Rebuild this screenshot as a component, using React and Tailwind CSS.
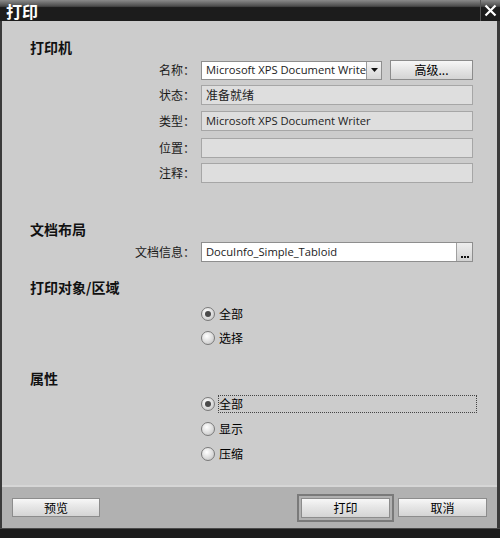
import React from "react"

const cjk = "font-['Noto_Sans_CJK_SC','Noto_Sans',sans-serif]"
const latin = "font-['Open_Sans','Noto_Sans_CJK_SC',sans-serif]"

function Field ({label, children, className = ""}) {
  return (
    <div className={`flex items-center h-[20px] ${className}`}>
      <span className={`w-[199px] pr-[6px] text-right text-[12px] text-[#1a1a1a] ${cjk}`}>{label}</span>
      {children}
    </div>
  )
}

function Box ({value, white}) {
  return (
    <div className={`w-[272px] h-[20px] border flex items-center px-[4px] text-[11.2px] leading-none text-[#222] ${white ? "bg-white border-[#8e8e8e]" : "bg-[#dedede] border-[#a6a6a6]"} ${latin}`}>
      {value}
    </div>
  )
}

function Btn ({label, className = ""}) {
  return (
    <button className={`h-[19px] border border-[#8c8c8c] bg-[linear-gradient(#f7f7f7,#e6e6e6_45%,#d4d4d4)] text-[12px] leading-none text-black flex items-center justify-center ${cjk} ${className}`}>
      {label}
    </button>
  )
}

function Radio ({label, checked, focused}) {
  return (
    <div className="flex items-center h-[20px] pl-[199px]">
      <span className="w-[14px] h-[14px] rounded-full border border-[#7a7a7a] bg-[radial-gradient(circle_at_40%_35%,#ffffff,#d8d8d8_60%,#b8b8b8)] flex items-center justify-center">
        {checked && <span className="w-[6px] h-[6px] rounded-full bg-[#4a4a4a]"></span>}
      </span>
      <span className={`ml-[3px] h-[18px] flex items-center text-[12px] text-black ${cjk} ${focused ? "w-[259px] border border-dotted border-[#444]" : "px-[1px]"}`}>
        {label}
      </span>
    </div>
  )
}

function Heading ({children, className = ""}) {
  return <p className={`pl-[28px] text-[14px] font-bold leading-none text-[#111] ${cjk} ${className}`}>{children}</p>
}

export default function App () {
  return (
    <div className="w-[500px] h-[538px] flex flex-col bg-[#1c1c1c] select-none">
      <div className="h-[21px] flex items-stretch bg-[linear-gradient(#8a8a8a,#4a4a4a_30%,#1c1c1c_36%,#1c1c1c)]">
        <span className={`pl-[6px] pt-[1px] text-[16px] font-bold leading-[20px] text-white ${cjk}`}>打印</span>
        <div className="ml-auto w-[20px] border-l border-[#555] flex items-center justify-center">
          <svg width="13" height="13" viewBox="0 0 13 13">
            <path d="M1.5 1.5 L11.5 11.5 M11.5 1.5 L1.5 11.5" stroke="white" strokeWidth="2.2" />
          </svg>
        </div>
      </div>

      <div className="flex-1 flex flex-col bg-[#cccccc] border-l-2 border-r-[3px] border-[#3a3a3a]">
        <Heading className="mt-[19px]">打印机</Heading>

        <Field label="名称：" className="mt-[6px]">
          <div className={`w-[181px] h-[19px] bg-white border border-[#8e8e8e] flex items-center text-[11.2px] text-[#222] ${latin}`}>
            <span className="flex-1 overflow-hidden whitespace-nowrap pl-[4px]">Microsoft XPS Document Write</span>
            <span className="w-[15px] h-full border-l border-[#9a9a9a] bg-[linear-gradient(#f4f4f4,#d6d6d6)] flex items-center justify-center">
              <svg width="7" height="4" viewBox="0 0 7 4"><path d="M0 0 H7 L3.5 4 Z" fill="#111" /></svg>
            </span>
          </div>
          <Btn label="高级..." className="ml-[8px] w-[83px] h-[20px]" />
        </Field>
        <Field label="状态：" className="mt-[5px]"><Box value={<span className={`${cjk} text-[12px]`}>准备就绪</span>} /></Field>
        <Field label="类型：" className="mt-[6px]"><Box value="Microsoft XPS Document Writer" /></Field>
        <Field label="位置：" className="mt-[7px]"><Box value="" /></Field>
        <Field label="注释：" className="mt-[5px]"><Box value="" /></Field>

        <Heading className="mt-[39px]">文档布局</Heading>
        <Field label="文档信息：" className="mt-[6px]">
          <div className={`w-[272px] h-[20px] bg-white border border-[#8e8e8e] flex items-center text-[11.2px] text-[#222] ${latin}`}>
            <span className="flex-1 pl-[4px]">DocuInfo_Simple_Tabloid</span>
            <span className="w-[16px] h-full border-l border-[#a0a0a0] bg-[linear-gradient(#eeeeee,#d2d2d2)] flex items-end justify-center gap-[1px] pb-[3px]">
              <span className="w-[2px] h-[2px] bg-[#111]"></span>
              <span className="w-[2px] h-[2px] bg-[#111]"></span>
              <span className="w-[2px] h-[2px] bg-[#111]"></span>
            </span>
          </div>
        </Field>

        <Heading className="mt-[18px]">打印对象/区域</Heading>
        <div className="mt-[10px] flex flex-col gap-[4px]">
          <Radio label="全部" checked />
          <Radio label="选择" />
        </div>

        <Heading className="mt-[23px]">属性</Heading>
        <div className="mt-[9px] flex flex-col gap-[5px]">
          <Radio label="全部" checked focused />
          <Radio label="显示" />
          <Radio label="压缩" />
        </div>

        <div className="mt-auto h-[43px] bg-[#b1b1b1] border-t-2 border-[#d6d6d6] flex items-center px-[10px]">
          <Btn label="预览" className="w-[88px]" />
          <div className="ml-auto p-[2px] border-2 border-[#7a7a7a]">
            <Btn label="打印" className="w-[89px] h-[20px]" />
          </div>
          <Btn label="取消" className="ml-[4px] w-[89px]" />
        </div>
      </div>

      <div className="h-[10px] bg-[#1c1c1c] border-t border-[#4a4a4a]"></div>
    </div>
  )
}
